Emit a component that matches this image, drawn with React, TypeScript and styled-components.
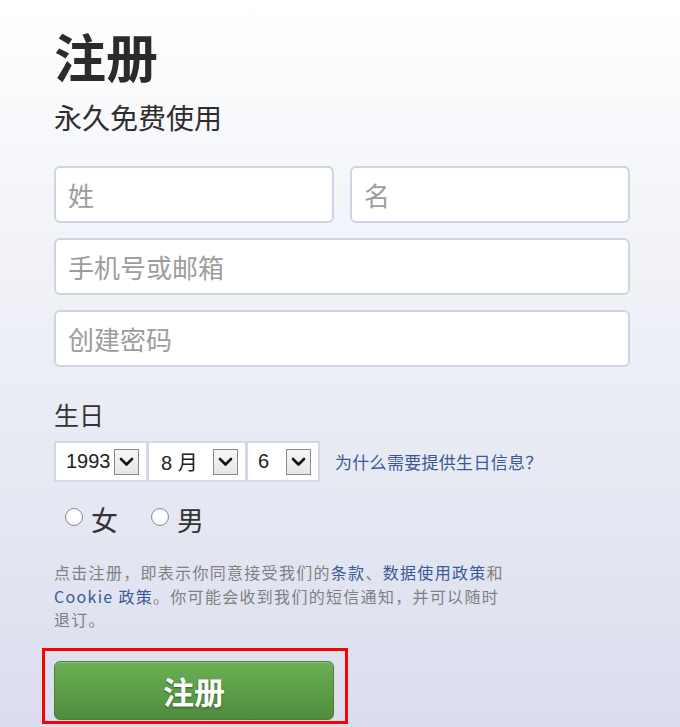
import React from "react";
import styled, { createGlobalStyle } from "styled-components";

const GlobalStyle = createGlobalStyle`
  html, body { margin: 0; padding: 0; }
  body {
    font-family: "Liberation Sans", "Noto Sans CJK SC", sans-serif;
    background: #ffffff;
  }
  * { box-sizing: border-box; }
`;

const Page = styled.div`
  width: 680px;
  height: 727px;
  overflow: hidden;
  background: linear-gradient(to bottom, #ffffff 0%, #f5f6fa 25%, #e9ebf4 60%, #dadded 100%);
  padding: 30px 0 0 54px;
  display: flex;
  flex-direction: column;
  align-items: flex-start;
`;

const Title = styled.h1`
  margin: 0;
  font-family: "Noto Sans CJK SC", sans-serif;
  font-size: 52px;
  line-height: 52px;
  font-weight: 700;
  color: #2b2b2b;
`;

const Subtitle = styled.div`
  margin-top: 21px;
  font-family: "Noto Sans CJK SC", sans-serif;
  font-size: 28px;
  line-height: 28px;
  color: #2e2e2e;
`;

const Fields = styled.div`
  margin-top: 35px;
  display: grid;
  grid-template-columns: 280px 280px;
  column-gap: 16px;
  row-gap: 15px;
`;

const Field = styled.input<{ $wide?: boolean }>`
  grid-column: ${(p) => (p.$wide ? "1 / span 2" : "auto")};
  height: 57px;
  width: 100%;
  border: 2px solid #cdd4e4;
  border-radius: 6px;
  background: #ffffff;
  padding: 0 0 0 12px;
  font-family: "Noto Sans CJK SC", sans-serif;
  font-size: 26px;
  color: #333;
  outline: none;
  &::placeholder { color: #9d9d9d; }
`;

const Label = styled.div`
  margin-top: 35px;
  font-family: "Noto Sans CJK SC", sans-serif;
  font-size: 25px;
  line-height: 25px;
  color: #333;
`;

const BirthRow = styled.div`
  margin-top: 14px;
  display: flex;
  align-items: center;
`;

const Select = styled.div<{ $w: number; $pad: number }>`
  width: ${(p) => p.$w}px;
  height: 41px;
  background: #ffffff;
  border: 2px solid #d2d8e7;
  margin-left: -1px;
  display: flex;
  align-items: center;
  padding: 0 7px 0 ${(p) => p.$pad}px;
  font-family: "Liberation Sans", "Noto Sans CJK SC", sans-serif;
  font-size: 20px;
  color: #222;
  &:first-child { margin-left: 0; }
`;

const Arrow = styled.span`
  margin-left: auto;
  width: 25px;
  height: 26px;
  background: linear-gradient(#f6f6f6, #e6e6e6);
  border: 1px solid #8a8a8a;
  display: flex;
  align-items: center;
  justify-content: center;
`;

const Why = styled.a`
  margin-left: 15px;
  font-family: "Noto Sans CJK SC", sans-serif;
  font-size: 17px;
  letter-spacing: 0.3px;
  color: #3b5998;
  text-decoration: none;
`;

const Genders = styled.div`
  margin-top: 23px;
  margin-left: 11px;
  display: flex;
  align-items: center;
  gap: 33px;
`;

const Gender = styled.label`
  display: flex;
  align-items: center;
  gap: 8px;
  font-family: "Noto Sans CJK SC", sans-serif;
  font-size: 27px;
  line-height: 30px;
  color: #333;
`;

const Radio = styled.span`
  width: 18px;
  height: 18px;
  border-radius: 50%;
  border: 1.5px solid #8c8c8c;
  background: radial-gradient(circle at 50% 40%, #ffffff 40%, #e8e8e8 100%);
  margin-top: -6px;
`;

const Terms = styled.p`
  margin: 26px 0 0;
  font-family: "Noto Sans CJK SC", sans-serif;
  font-size: 16px;
  line-height: 23.5px;
  letter-spacing: 1.3px;
  color: #808080;
`;

const TermLink = styled.a`
  color: #3b5998;
  text-decoration: none;
`;

const Highlight = styled.div`
  margin-top: 16px;
  margin-left: -12px;
  border: 3px solid #ff0000;
  padding: 10px 11px 1px 9px;
`;

const SubmitButton = styled.button`
  width: 280px;
  height: 59px;
  border: 1px solid #4a7f37;
  border-radius: 6px;
  background: linear-gradient(to bottom, #6aae55 0%, #5d9f48 50%, #4f8b3c 100%);
  box-shadow: inset 0 1px 0 rgba(255, 255, 255, 0.25);
  font-family: "Noto Sans CJK SC", sans-serif;
  font-size: 31px;
  font-weight: 700;
  color: #ffffff;
  text-shadow: 0 1px 2px rgba(0, 0, 0, 0.45);
  display: flex;
  align-items: center;
  justify-content: center;
  padding: 0;
`;

const Chevron = () => (
  <svg width="15" height="10" viewBox="0 0 15 10">
    <path d="M2 2 L7.5 7.5 L13 2" fill="none" stroke="#111" strokeWidth="2.6" strokeLinecap="round" strokeLinejoin="round" />
  </svg>
);

export default function App() {
  return (
    <>
      <GlobalStyle />
      <Page>
        <Title>注册</Title>
        <Subtitle>永久免费使用</Subtitle>
        <Fields>
          <Field placeholder="姓" />
          <Field placeholder="名" />
          <Field $wide placeholder="手机号或邮箱" />
          <Field $wide placeholder="创建密码" type="text" />
        </Fields>
        <Label>生日</Label>
        <BirthRow>
          <Select $w={94} $pad={10}>
            1993
            <Arrow><Chevron /></Arrow>
          </Select>
          <Select $w={100} $pad={12}>
            8 月
            <Arrow><Chevron /></Arrow>
          </Select>
          <Select $w={74} $pad={10}>
            6
            <Arrow><Chevron /></Arrow>
          </Select>
          <Why href="#">为什么需要提供生日信息？</Why>
        </BirthRow>
        <Genders>
          <Gender><Radio />女</Gender>
          <Gender><Radio />男</Gender>
        </Genders>
        <Terms>
          点击注册，即表示你同意接受我们的<TermLink href="#">条款</TermLink>、<TermLink href="#">数据使用政策</TermLink>和
          <br />
          <TermLink href="#">Cookie 政策</TermLink>。你可能会收到我们的短信通知，并可以随时
          <br />
          退订。
        </Terms>
        <Highlight>
          <SubmitButton>注册</SubmitButton>
        </Highlight>
      </Page>
    </>
  );
}
